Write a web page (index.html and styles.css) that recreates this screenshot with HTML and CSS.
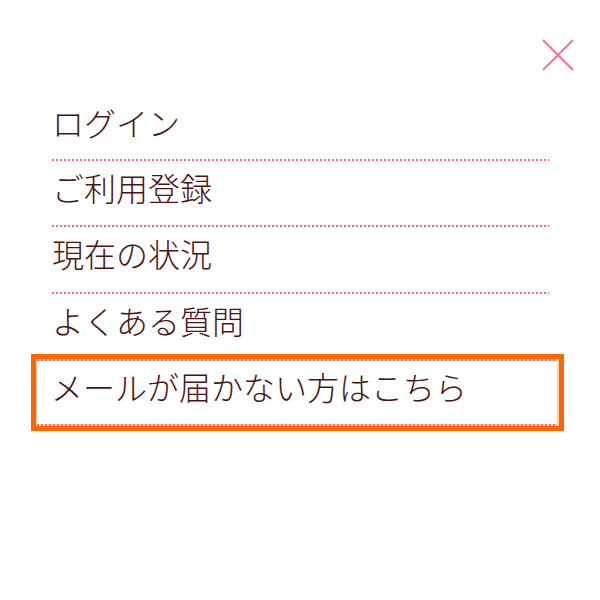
FILE: index.html
```html
<!DOCTYPE html>
<html lang="ja">
<head>
<meta charset="utf-8">
<link rel="stylesheet" href="styles.css">
</head>
<body>
<nav class="menu">
  <div class="menu-head">
    <button class="close" aria-label="閉じる">
      <svg width="32" height="32" viewBox="0 0 32 32"><path d="M1 1 L31 31 M31 1 L1 31" stroke="#f3729a" stroke-width="2" fill="none"/></svg>
    </button>
  </div>
  <ul class="list">
    <li class="item item-1"><a href="#">ログイン</a></li>
    <li class="item item-2"><a href="#">ご利用登録</a></li>
    <li class="item item-3"><a href="#">現在の状況</a></li>
    <li class="item item-4"><a href="#">よくある質問</a></li>
    <li class="item-focus"><a href="#">メールが届かない方はこちら</a></li>
  </ul>
</nav>
</body>
</html>
```
FILE: styles.css
```css
html, body {
  margin: 0;
  padding: 0;
  background: #ffffff;
}
body {
  width: 600px;
  height: 600px;
  font-family: "Noto Sans CJK JP", "Noto Sans", sans-serif;
}
.menu {
  padding: 0 51px 0 52px;
}
.menu-head {
  display: flex;
  justify-content: flex-end;
  height: 96px;
  padding-top: 39px;
  box-sizing: border-box;
  margin-right: -25px;
}
.close {
  border: 0;
  background: none;
  padding: 0;
  width: 32px;
  height: 32px;
  cursor: pointer;
}
.close svg {
  display: block;
}
.list {
  list-style: none;
  margin: 0;
  padding: 0;
}
.item {
  padding-bottom: 2px;
  background: repeating-linear-gradient(to right, #f2668f 0 2px, transparent 2px 4px) left bottom / 100% 2px no-repeat;
}
.item a,
.item-focus a {
  display: block;
  color: #4a1414;
  text-decoration: none;
  font-size: 32px;
  font-weight: 300;
  line-height: 52px;
}
.item-1 a { height: 63px; }
.item-2 a { height: 64px; }
.item-3 a { height: 65px; }
.item-4 a { height: 65px; }
.item-focus {
  margin: -7px -15px 0 -21px;
  border: 5px solid #ff6600;
}
.item-focus a {
  height: 63px;
  padding: 2px 0 2px 14px;
  line-height: 50px;
  border-left: 1px solid #ffcfae;
  border-right: 2px solid #ffcfae;
  background:
    repeating-linear-gradient(to right, #f2668f 0 2px, #ffcfae 2px 4px) left top / 100% 2px no-repeat,
    repeating-linear-gradient(to right, #f2668f 0 2px, #ffcfae 2px 4px) left bottom / 100% 2px no-repeat;
}
```
